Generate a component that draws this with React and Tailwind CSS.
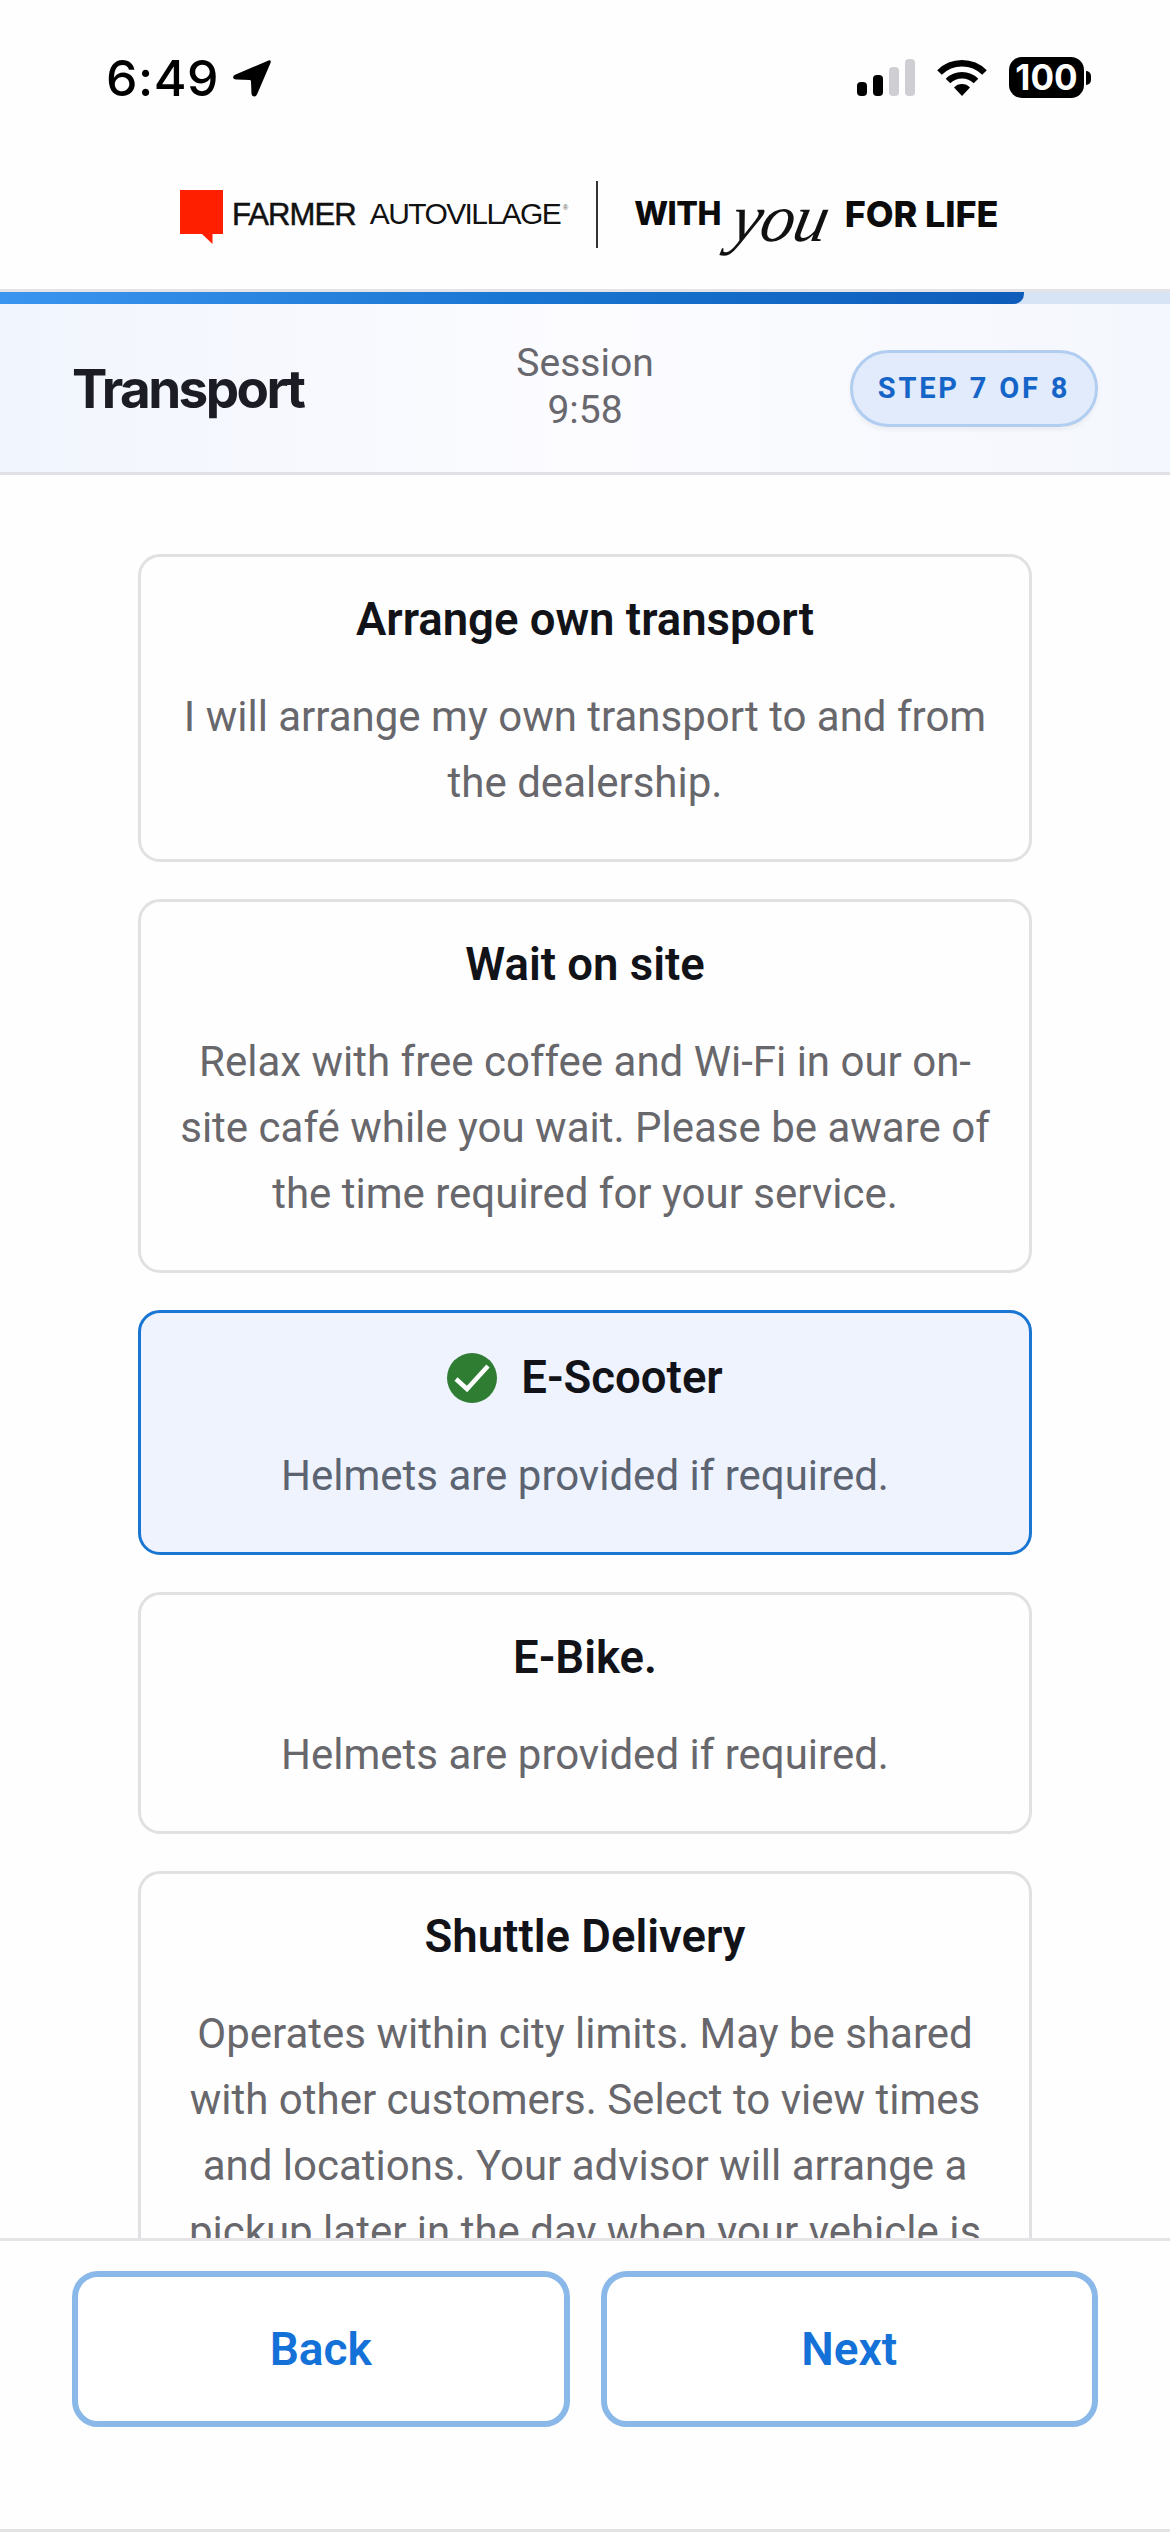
import React from "react";

const roboto = "font-['Roboto',sans-serif]";
const inter = "font-['Inter',sans-serif]";

function Signal() {
  return (
    <svg width="58" height="37" viewBox="0 0 58 37" aria-hidden="true">
      <rect x="0" y="23" width="10" height="14" rx="4" fill="#000" />
      <rect x="16" y="16" width="10" height="21" rx="4" fill="#000" />
      <rect x="32" y="8" width="10" height="29" rx="4" fill="#cfcfd3" />
      <rect x="48" y="0" width="10" height="37" rx="4" fill="#cfcfd3" />
    </svg>
  );
}

function Wifi() {
  return (
    <svg width="50" height="37" viewBox="0 0 50 37" aria-hidden="true">
      <path d="M2.5 13.5 A32 32 0 0 1 47.5 13.5" fill="none" stroke="#000" strokeWidth="6.5" strokeLinecap="butt" />
      <path d="M11 22 A20 20 0 0 1 39 22" fill="none" stroke="#000" strokeWidth="6.5" strokeLinecap="butt" />
      <path d="M17 28.5 A11 11 0 0 1 33 28.5 L25 37 Z" fill="#000" />
    </svg>
  );
}

function Battery() {
  return (
    <div className="flex items-center">
      <div className={`flex h-[41px] w-[75px] items-center justify-center rounded-[13px] bg-black text-[35px] leading-none font-bold tracking-[0px] text-white ${inter}`}>
        100
      </div>
      <div className="ml-[2px] h-[14px] w-[5px] rounded-r-full bg-black" />
    </div>
  );
}

function Arrow() {
  return (
    <svg width="40" height="40" viewBox="0 0 40 40" aria-hidden="true">
      <path
        d="M36.5 2.5 L2.5 17 Q0.5 18.5 1.5 20.5 Q2.5 21.5 4.5 21.5 L18 22 Q19 22 19 23.5 L19.5 36 Q20 38.5 22.5 38.5 Q24 38.5 25 36.5 L38.5 5 Q39.5 1.5 36.5 2.5 Z"
        fill="#000"
      />
    </svg>
  );
}

function StatusBar() {
  return (
    <div className="flex h-[155px] items-start justify-between pt-[57px] pr-[79px] pl-[106px]">
      <div className="flex items-center gap-[13px]">
        <span className={`text-[50px] leading-[42px] font-medium tracking-[0.5px] text-black ${inter}`}>6:49</span>
        <Arrow />
      </div>
      <div className="flex items-center gap-[22px]">
        <Signal />
        <Wifi />
        <Battery />
      </div>
    </div>
  );
}

function Logo() {
  return (
    <div className="mb-[16px] flex h-[118px] items-center pl-[180px]">
      <div className="relative mt-[-4px] mr-[9px] h-[44px] w-[43px] bg-[#fe1f00]">
        <svg className="absolute top-[44px] left-[22px]" width="11" height="10" viewBox="0 0 11 10" aria-hidden="true">
          <path d="M0 0 H10.5 V10 Z" fill="#fe1f00" />
        </svg>
      </div>
      <span className="text-[31px] leading-none font-normal tracking-[-0.9px] text-[#111] font-['Liberation_Sans',sans-serif] [-webkit-text-stroke:0.5px_#111]">FARMER</span>
      <span className="ml-[14px] text-[30px] leading-none font-normal tracking-[-1.6px] text-[#111] font-['Liberation_Sans',sans-serif]">AUTOVILLAGE</span>
      <span className="mb-[14px] ml-[3px] text-[7px] leading-none text-[#555] font-['Liberation_Sans',sans-serif]">®</span>
      <div className="mr-[36px] ml-[28px] h-[67px] w-[2px] bg-[#333]" />
      <span className={`text-[32px] leading-none font-extrabold tracking-[-0.5px] text-[#0b0b0b] ${inter}`}>WITH</span>
      <span className="mt-[8px] ml-[12px] w-[112px] shrink-0 -skew-x-12 text-[68px] leading-none tracking-[-1px] text-[#111] italic font-['Liberation_Serif',serif]">you</span>
      <span className={`text-[36px] leading-none font-extrabold tracking-[-0.1px] text-[#0b0b0b] ${inter}`}>FOR LIFE</span>
    </div>
  );
}

function SessionHeader() {
  return (
    <div>
      <div className="h-[3px] bg-[#e4e4e8]" />
      <div className="h-[12px] bg-[#d6e4f5]">
        <div className="h-full w-[1024px] rounded-br-[10px] bg-gradient-to-r from-[#3a95f0] via-[#1976d2] to-[#0f5cba]" />
      </div>
      <div className="relative flex h-[171px] items-center justify-between border-b-[3px] border-[#dfe1e7] bg-gradient-to-r from-[#f1f5fd] via-[#fcfcff] to-[#f4f7fd] px-[72px]">
        <h1 className={`mt-[2px] text-[53px] leading-none font-bold tracking-[-2.6px] text-[#1b1c24] ${inter}`}>Transport</h1>
        <div className={`absolute top-[36px] left-[0px] w-[1170px] text-center text-[39px] leading-[47px] text-[#68686e] ${roboto}`}>
          Session
          <br />
          9:58
        </div>
        <div className={`relative flex h-[77px] w-[248px] items-center justify-center rounded-full border-[3px] border-[#b1cdf0] bg-[#e1ebfb] text-[29px] leading-none font-bold tracking-[2.8px] text-[#1565c8] shadow-[0_3px_4px_rgba(0,0,0,0.05)] ${roboto}`}>
          STEP 7 OF 8
        </div>
      </div>
    </div>
  );
}

function Check() {
  return (
    <svg width="50" height="50" viewBox="0 0 50 50" aria-hidden="true">
      <circle cx="25" cy="25" r="25" fill="#2e7d32" />
      <path d="M9 26 L20 36 L41 13" fill="none" stroke="#fff" strokeWidth="4.5" />
    </svg>
  );
}

function Card({ title, desc, selected }) {
  return (
    <div
      className={`shrink-0 rounded-[22px] border-[3px] px-[30px] pt-[35px] pb-[43px] text-center ${roboto} ${
        selected ? "border-[#1976d2] bg-[#eef3fe]" : "border-[#e1e1e4] bg-[#fefefe]"
      }`}
    >
      <div className={`flex items-center justify-center gap-[24px] text-[45.5px] font-semibold text-[#111318] ${selected ? "h-[59px] leading-[59px]" : "h-[56px] leading-[56px]"}`}>
        {selected && <Check />}
        <span>{title}</span>
      </div>
      <p className={`mt-[36px] text-[42px] leading-[66px] ${selected ? "text-[#5c6472]" : "text-[#67676c]"}`}>{desc}</p>
    </div>
  );
}

function Footer() {
  const btn = `flex h-[156px] flex-1 items-center justify-center rounded-[26px] border-[6px] border-[#89b8e9] bg-white text-[46px] font-semibold text-[#1471d8] ${roboto}`;
  return (
    <div className="flex h-[294px] shrink-0 flex-col border-t-[3px] border-[#e5e3e5] bg-[#fefefe]">
      <div className="flex gap-[31px] px-[72px] pt-[30px]">
        <button className={btn}>Back</button>
        <button className={btn}>Next</button>
      </div>
      <div className="mt-auto h-[3px] bg-[#e3e3e3]" />
    </div>
  );
}

export default function App() {
  return (
    <div className="flex h-[2532px] w-[1170px] flex-col overflow-hidden bg-[#fefefe]">
      <StatusBar />
      <Logo />
      <SessionHeader />
      <main className="flex min-h-0 flex-1 flex-col gap-[37px] overflow-hidden px-[138px] pt-[79px]">
        <Card title="Arrange own transport" desc="I will arrange my own transport to and from the dealership." />
        <Card title="Wait on site" desc="Relax with free coffee and Wi-Fi in our on-site café while you wait. Please be aware of the time required for your service." />
        <Card selected title="E-Scooter" desc="Helmets are provided if required." />
        <Card title="E-Bike." desc="Helmets are provided if required." />
        <Card title="Shuttle Delivery" desc="Operates within city limits. May be shared with other customers. Select to view times and locations. Your advisor will arrange a pickup later in the day when your vehicle is ready." />
      </main>
      <Footer />
    </div>
  );
}
